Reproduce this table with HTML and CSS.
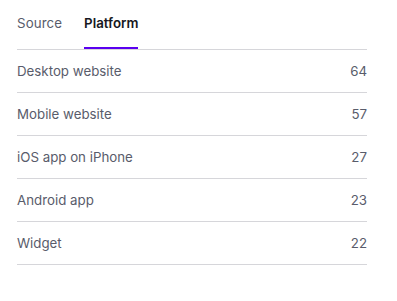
FILE: index.html
```html
<!DOCTYPE html>
<html>
<head>
<meta charset="utf-8">
<link rel="stylesheet" href="styles.css">
</head>
<body>
<div class="panel">
  <div class="tabs">
    <div class="tab">Source</div>
    <div class="tab active">Platform</div>
  </div>
  <ul class="list">
    <li class="row"><span>Desktop website</span><span>64</span></li>
    <li class="row"><span>Mobile website</span><span>57</span></li>
    <li class="row"><span>iOS app on iPhone</span><span>27</span></li>
    <li class="row"><span>Android app</span><span>23</span></li>
    <li class="row"><span>Widget</span><span>22</span></li>
  </ul>
</div>
</body>
</html>
```
FILE: styles.css
```css
html, body { margin: 0; padding: 0; background: #fff; }
body { font-family: Inter, "Noto Sans", sans-serif; font-size: 13.3px; color: #595c6b; }
.panel { width: 350px; padding-left: 17px; }
.tabs { display: flex; gap: 22px; border-bottom: 1px solid #d6d6da; height: 49px; }
.tab { padding-top: 14px; height: 35px; box-sizing: content-box; line-height: 18px; letter-spacing: 0.1px; }
.tab.active { color: #161821; font-weight: 600; border-bottom: 2px solid #5a00f0; height: 33px; margin-bottom: -1px; letter-spacing: 0; }
.list { list-style: none; margin: 0; padding: 0; }
.row { display: flex; justify-content: space-between; align-items: center; height: 42px; border-bottom: 1px solid #d6d6da; }
```
